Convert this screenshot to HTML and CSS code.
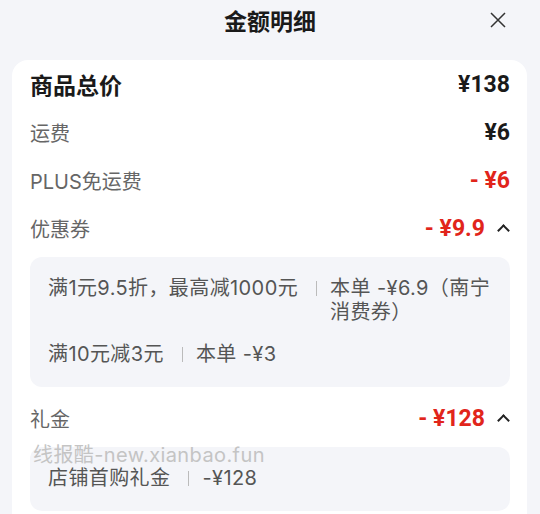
FILE: index.html
```html
<!DOCTYPE html>
<html lang="zh-CN">
<head>
  <meta charset="UTF-8">
  <meta name="viewport" content="width=device-width, initial-scale=1.0">
  <title>金额明细</title>
  <link rel="stylesheet" href="styles.css">
</head>
<body>
  <div class="header">
    <h1>金额明细</h1>
    <span class="close">
      <svg width="16" height="16" viewBox="0 0 16 16"><path d="M1 1L15 15M15 1L1 15" stroke="#333" stroke-width="1.5" fill="none"/></svg>
    </span>
  </div>

  <div class="card">
    <div class="row total">
      <span class="label">商品总价</span>
      <span class="value">¥138</span>
    </div>
    <div class="row">
      <span class="label">运费</span>
      <span class="value">¥6</span>
    </div>
    <div class="row">
      <span class="label">PLUS免运费</span>
      <span class="value red">- ¥6</span>
    </div>
    <div class="row">
      <span class="label">优惠券</span>
      <span class="value red">- ¥9.9<i class="caret"></i></span>
    </div>
    <div class="detail">
      <div class="line">
        <span>满1元9.5折，最高减1000元</span>
        <span class="sep"></span>
        <span class="right">本单 -¥6.9（南宁消费券）</span>
      </div>
      <div class="line">
        <span>满10元减3元</span>
        <span class="sep"></span>
        <span class="right">本单 -¥3</span>
      </div>
    </div>
    <div class="row">
      <span class="label">礼金</span>
      <span class="value red">- ¥128<i class="caret"></i></span>
    </div>
    <div class="detail">
      <div class="line">
        <span>店铺首购礼金</span>
        <span class="sep"></span>
        <span class="right">-¥128</span>
      </div>
    </div>
  </div>

  <div class="watermark">线报酷-new.xianbao.fun</div>
</body>
</html>
```

FILE: styles.css
```css
body {
  margin: 0;
  background: #f4f5f9;
  font-family: Inter, "Noto Sans CJK SC", sans-serif;
  color: #1a1a1a;
  height: 514px;
  overflow: hidden;
  position: relative;
}

.header {
  height: 44px;
  display: flex;
  align-items: center;
  justify-content: center;
  position: relative;
}

.header h1 {
  margin: 0;
  font-size: 23px;
  font-weight: 700;
  line-height: 30px;
}

.close {
  position: absolute;
  right: 34px;
  top: 12px;
  width: 16px;
  height: 16px;
}

.close svg {
  display: block;
}

.card {
  margin: 16px 13px 0 12px;
  background: #fff;
  border-radius: 16px;
  padding: 0 17px 40px 18px;
}

.row {
  height: 48px;
  display: flex;
  align-items: center;
  justify-content: space-between;
}

.label {
  font-size: 20px;
  color: #666;
}

.total .label {
  font-size: 23px;
  font-weight: 700;
  color: #1a1a1a;
}

.value {
  font-family: Roboto, "Noto Sans CJK SC", sans-serif;
  font-size: 23px;
  font-weight: 700;
  color: #1a1a1a;
  display: flex;
  align-items: center;
}

.red {
  color: #e1251b;
}

.caret {
  width: 7px;
  height: 7px;
  border-left: 2px solid #222;
  border-top: 2px solid #222;
  transform: rotate(45deg);
  margin: 5px 2px 0 14px;
}

.detail {
  background: #f4f5f9;
  border-radius: 12px;
  padding: 19px 16px 21px 18px;
  margin: 5px 0 7px;
  font-size: 20px;
  letter-spacing: 0.4px;
  color: #555;
  line-height: 24px;
}

.line {
  display: flex;
  align-items: flex-start;
}

.line + .line {
  margin-top: 18px;
}

.sep {
  width: 1px;
  height: 15px;
  background: #bbb;
  margin: 5px 13px 0 18px;
  flex-shrink: 0;
}

.right {
  flex: 1;
}

.watermark {
  position: absolute;
  left: 33px;
  top: 444px;
  font-size: 20px;
  letter-spacing: 0.4px;
  color: #c4c4c4;
  line-height: 22px;
}
```
